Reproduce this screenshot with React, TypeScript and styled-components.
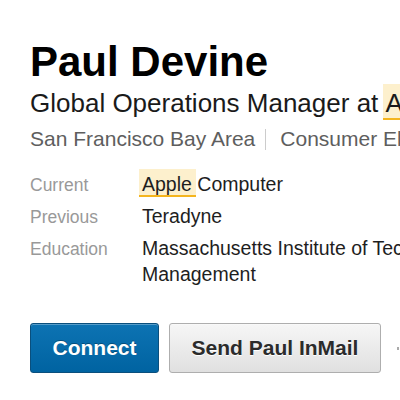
import styled, { createGlobalStyle } from 'styled-components';

const GlobalStyle = createGlobalStyle`
    html, body {
        margin: 0;
        padding: 0;
        background: #fff;
        overflow: hidden;
    }
    body {
        font-family: "Liberation Sans", Arial, sans-serif;
        -webkit-font-smoothing: antialiased;
    }
`;

const Profile = styled.div`
    width: 400px;
    height: 400px;
    box-sizing: border-box;
    padding: 37px 0 0 30px;
    overflow: hidden;
    white-space: nowrap;
`;

const Name = styled.h1`
    margin: 0;
    font-size: 42px;
    line-height: 50px;
    font-weight: 700;
    color: #000;
`;

const Headline = styled.p`
    margin: 1px 0 0;
    font-size: 26px;
    line-height: 30px;
    color: #1a1a1a;
`;

const Demographics = styled.div`
    display: flex;
    align-items: center;
    margin-top: 7px;
    font-size: 21px;
    line-height: 28px;
    color: #5e5e5e;
`;

const Separator = styled.span`
    flex-shrink: 0;
    width: 1px;
    height: 21px;
    background: #cccccc;
    margin: 0 14px 0 10px;
`;

const Highlight = styled.span`
    background: #fdf0cd;
    box-shadow: inset 0 -2px 0 #f4b51f;
    padding: 4px 4px 2px 3px;
    margin: 0 -4px 0 -3px;
`;

const Details = styled.dl`
    display: grid;
    grid-template-columns: 112px 1fr;
    align-items: baseline;
    row-gap: 5px;
    margin: 18px 0 0;
`;

const Label = styled.dt`
    font-size: 17.5px;
    line-height: 26px;
    color: #999;
`;

const Value = styled.dd`
    margin: 0;
    font-size: 19.5px;
    line-height: 26px;
    color: #1e1e1e;
`;

const Actions = styled.div`
    display: flex;
    align-items: center;
    gap: 10px;
    margin-top: 36px;
`;

const Button = styled.button<{ $primary?: boolean }>`
    flex-shrink: 0;
    height: 50px;
    box-sizing: border-box;
    padding: 0;
    border-radius: 3px;
    font-family: "Liberation Sans", Arial, sans-serif;
    font-size: 21px;
    font-weight: 700;
    cursor: pointer;
    border: 1px solid ${p => (p.$primary ? '#0a4f7d' : '#aeaeae')};
    color: ${p => (p.$primary ? '#fff' : '#2b2b2b')};
    background: ${p =>
        p.$primary
            ? 'linear-gradient(#0d73b3, #0063a1)'
            : 'linear-gradient(#f6f6f6, #e0e0e0)'};
    text-shadow: ${p => (p.$primary ? '0 -1px 0 rgba(0,0,0,0.3)' : '0 1px 0 #fff')};
    box-shadow: inset 0 1px 0 rgba(255, 255, 255, 0.3);
`;

const MoreDot = styled.span`
    flex-shrink: 0;
    width: 2px;
    height: 3px;
    margin-left: 6px;
    background: #aaa;
`;

export default function App() {
    return (
        <>
            <GlobalStyle />
            <Profile>
                <Name>Paul Devine</Name>
                <Headline>
                    Global Operations Manager at <Highlight>Apple</Highlight> Computer
                </Headline>
                <Demographics>
                    <span>San Francisco Bay Area</span>
                    <Separator />
                    <span>Consumer Electronics</span>
                </Demographics>
                <Details>
                    <Label>Current</Label>
                    <Value>
                        <Highlight>Apple</Highlight> Computer
                    </Value>
                    <Label>Previous</Label>
                    <Value>Teradyne</Value>
                    <Label>Education</Label>
                    <Value>
                        Massachusetts Institute of Technology - Sloan School of
                        <br />
                        Management
                    </Value>
                </Details>
                <Actions>
                    <Button $primary style={{ width: 129 }}>Connect</Button>
                    <Button style={{ width: 212 }}>Send Paul InMail</Button>
                    <MoreDot />
                </Actions>
            </Profile>
        </>
    );
}
